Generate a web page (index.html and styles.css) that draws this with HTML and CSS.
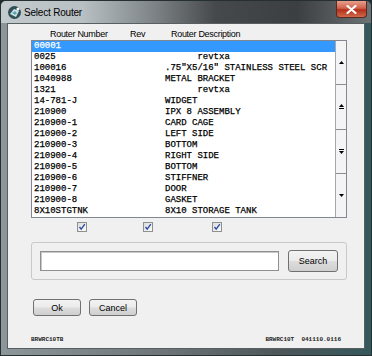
FILE: index.html
```html
<!DOCTYPE html>
<html lang="en">
<head>
  <meta charset="UTF-8">
  <title>Select Router</title>
  <link rel="stylesheet" href="styles.css">
</head>
<body>

<div class="window">
  <div class="titlebar">
    <svg class="app-icon" width="15" height="15" viewBox="0 0 15 15">
      <circle cx="7.5" cy="7.5" r="6.5" fill="#2f4f57"/>
      <path d="M3 9 L7 4 L12 6 L9 12 Z" fill="#cfe3e8"/>
      <path d="M5 8 L8 6 L10 8 L8 10 Z" fill="#5fa4b3"/>
      <circle cx="11" cy="4" r="1.6" fill="#ffffff"/>
    </svg>
    <span class="title">Select Router</span>
    <div class="close-btn">
      <svg width="11" height="9" viewBox="0 0 11 9">
        <path d="M1.5 1 L9.5 8 M9.5 1 L1.5 8" stroke="#fff" stroke-width="2.2" stroke-linecap="round"/>
      </svg>
    </div>
  </div>

  <div class="client">
    <div class="col-heads">
      <span class="head-num">Router Number</span>
      <span class="head-rev">Rev</span>
      <span class="head-desc">Router Description</span>
    </div>

    <div class="listbox">
      <ul class="rows">
        <li class="selected"><span class="num">00001</span><span class="desc"></span></li>
        <li><span class="num">0025</span><span class="desc">      revtxa</span></li>
        <li><span class="num">100016</span><span class="desc">.75"X5/16" STAINLESS STEEL SCR</span></li>
        <li><span class="num">1040988</span><span class="desc">METAL BRACKET</span></li>
        <li><span class="num">1321</span><span class="desc">      revtxa</span></li>
        <li><span class="num">14-781-J</span><span class="desc">WIDGET</span></li>
        <li><span class="num">210900</span><span class="desc">IPX 8 ASSEMBLY</span></li>
        <li><span class="num">210900-1</span><span class="desc">CARD CAGE</span></li>
        <li><span class="num">210900-2</span><span class="desc">LEFT SIDE</span></li>
        <li><span class="num">210900-3</span><span class="desc">BOTTOM</span></li>
        <li><span class="num">210900-4</span><span class="desc">RIGHT SIDE</span></li>
        <li><span class="num">210900-5</span><span class="desc">BOTTOM</span></li>
        <li><span class="num">210900-6</span><span class="desc">STIFFNER</span></li>
        <li><span class="num">210900-7</span><span class="desc">DOOR</span></li>
        <li><span class="num">210900-8</span><span class="desc">GASKET</span></li>
        <li><span class="num">8X10STGTNK</span><span class="desc">8X10 STORAGE TANK</span></li>
      </ul>
      <div class="vscroll">
        <div class="sb-btn">
          <svg width="5" height="3" viewBox="0 0 5 3"><path d="M0 3 L2.5 0 L5 3 Z" fill="#000"/></svg>
        </div>
        <div class="sb-btn">
          <svg width="5" height="5" viewBox="0 0 5 5"><path d="M0 3 L2.5 0 L5 3 Z" fill="#000"/><rect x="0" y="4" width="5" height="1" fill="#000"/></svg>
        </div>
        <div class="sb-btn">
          <svg width="5" height="5" viewBox="0 0 5 5"><rect x="0" y="0" width="5" height="1" fill="#000"/><path d="M0 2 L2.5 5 L5 2 Z" fill="#000"/></svg>
        </div>
        <div class="sb-btn">
          <svg width="5" height="3" viewBox="0 0 5 3"><path d="M0 0 L2.5 3 L5 0 Z" fill="#000"/></svg>
        </div>
      </div>
    </div>

    <div class="checks">
      <span class="check check-num"><svg width="8" height="8" viewBox="0 0 8 8"><path d="M1.5 4 L3.2 6.2 L6.8 1.2" stroke="#2c4ea0" stroke-width="1.4" fill="none"/></svg></span>
      <span class="check check-rev"><svg width="8" height="8" viewBox="0 0 8 8"><path d="M1.5 4 L3.2 6.2 L6.8 1.2" stroke="#2c4ea0" stroke-width="1.4" fill="none"/></svg></span>
      <span class="check check-desc"><svg width="8" height="8" viewBox="0 0 8 8"><path d="M1.5 4 L3.2 6.2 L6.8 1.2" stroke="#2c4ea0" stroke-width="1.4" fill="none"/></svg></span>
    </div>

    <div class="searchbox">
      <input type="text" class="search-input">
      <button class="btn search-btn">Search</button>
    </div>

    <div class="actions">
      <button class="btn">Ok</button>
      <button class="btn">Cancel</button>
    </div>

    <div class="footer">
      <span>BRWRC10TB</span>
      <span>BRWRC10T&nbsp;&nbsp;041110.0116</span>
    </div>
  </div>
</div>

</body>
</html>
```

FILE: styles.css
```css
body {
  margin: 0;
  background-color: #1f2c2f;
  font-family: "Liberation Sans", Arial, sans-serif;
}
.window {
  width: 372px;
  height: 356px;
  box-sizing: border-box;
  border: 1px solid #263033;
  border-radius: 6px 6px 0 0;
  background: linear-gradient(90deg, #8d969a 0%, #6c7477 45%, #4d5659 75%, #35585c 100%);
  padding: 0 6px 6px;
  display: flex;
  flex-direction: column;
  overflow: hidden;
}
.titlebar {
  height: 22px;
  margin: 0 -6px;
  padding: 0 4px 0 6px;
  display: flex;
  align-items: center;
  background: linear-gradient(90deg, #c3cace 0%, #b9c0c4 22%, #7b8184 42%, #46494b 58%, #3c3f41 80%, #6d7275 100%);
}
.app-icon {
  flex: none;
}
.title {
  margin-left: 2px;
  font-size: 10px;
  letter-spacing: -0.2px;
  color: #000;
}
.close-btn {
  margin-left: auto;
  align-self: flex-start;
  width: 31px;
  height: 17px;
  box-sizing: border-box;
  border: 1px solid #5a2a24;
  border-top: none;
  border-radius: 0 0 4px 4px;
  background: linear-gradient(180deg, #e8a08f 0%, #d2614a 45%, #b3301a 55%, #cf6a4a 100%);
  display: flex;
  align-items: center;
  justify-content: center;
}
.client {
  flex: 1;
  background-color: #f0f0f0;
  border: 1px solid #575f62;
  display: flex;
  flex-direction: column;
  padding: 0 0 0 23px;
}
.col-heads {
  display: grid;
  grid-template-columns: 80px 41px auto;
  margin-left: 19px;
  padding-top: 5px;
  font-size: 9px;
  line-height: 11px;
  letter-spacing: -0.3px;
  color: #000;
}
.listbox {
  width: 316px;
  height: 178px;
  box-sizing: border-box;
  border: 1px solid #828790;
  background-color: #fff;
  display: flex;
}
.rows {
  flex: 1;
  list-style: none;
  margin: 0;
  padding: 0;
  font-family: "Liberation Mono", "Courier New", monospace;
  font-size: 9px;
  line-height: 11px;
  color: #000;
  -webkit-text-stroke: 0.25px #000;
}
.rows li {
  display: flex;
  height: 11px;
  padding-left: 2px;
  white-space: pre;
}
.rows li.selected {
  background-color: #3399ff;
  color: #fff;
  -webkit-text-stroke: 0.25px #fff;
}
.num {
  width: 131px;
}
.vscroll {
  width: 11px;
  box-sizing: border-box;
  border-left: 1px solid #a7a7a7;
  background-color: #f4f4f4;
  display: flex;
  flex-direction: column;
}
.sb-btn {
  flex: 1;
  display: flex;
  align-items: center;
  justify-content: center;
  border-top: 1px solid #8c8c8c;
}
.sb-btn:first-child {
  border-top: none;
}
.checks {
  display: flex;
  margin-top: 4px;
  height: 10px;
}
.check {
  width: 10px;
  height: 10px;
  box-sizing: border-box;
  border: 1px solid #8e8f8f;
  background: linear-gradient(135deg, #dcdcdc, #fbfbfb);
  display: flex;
  align-items: center;
  justify-content: center;
}
.check-num {
  margin-left: 46px;
}
.check-rev {
  margin-left: 56px;
}
.check-desc {
  margin-left: 59px;
}
.searchbox {
  margin-top: 10px;
  width: 316px;
  height: 38px;
  box-sizing: border-box;
  border: 1px solid #c9c9c9;
  border-radius: 3px;
  padding: 0 8px;
  display: flex;
  align-items: center;
  gap: 9px;
}
.search-input {
  width: 239px;
  height: 20px;
  box-sizing: border-box;
  margin: 0;
  border: 1px solid #8e8f8f;
  box-shadow: inset 1px 1px 0 #c8c8c8;
  background-color: #fff;
}
.btn {
  width: 48px;
  height: 17px;
  box-sizing: border-box;
  margin: 0;
  padding: 0;
  border: 1px solid #707070;
  border-radius: 3px;
  background: linear-gradient(180deg, #f3f3f3 0%, #ebebeb 48%, #dddddd 52%, #cfcfcf 100%);
  font-family: "Liberation Sans", Arial, sans-serif;
  font-size: 9px;
  color: #000;
}
.search-btn {
  width: 50px;
  height: 22px;
}
.actions {
  display: flex;
  gap: 8px;
  margin: 19px 0 0 2px;
}
.footer {
  margin-top: auto;
  padding: 0 23px 4px 0;
  display: flex;
  justify-content: space-between;
  font-family: "Liberation Mono", "Courier New", monospace;
  font-size: 6px;
  font-weight: bold;
  line-height: 8px;
  color: #222;
}
```
